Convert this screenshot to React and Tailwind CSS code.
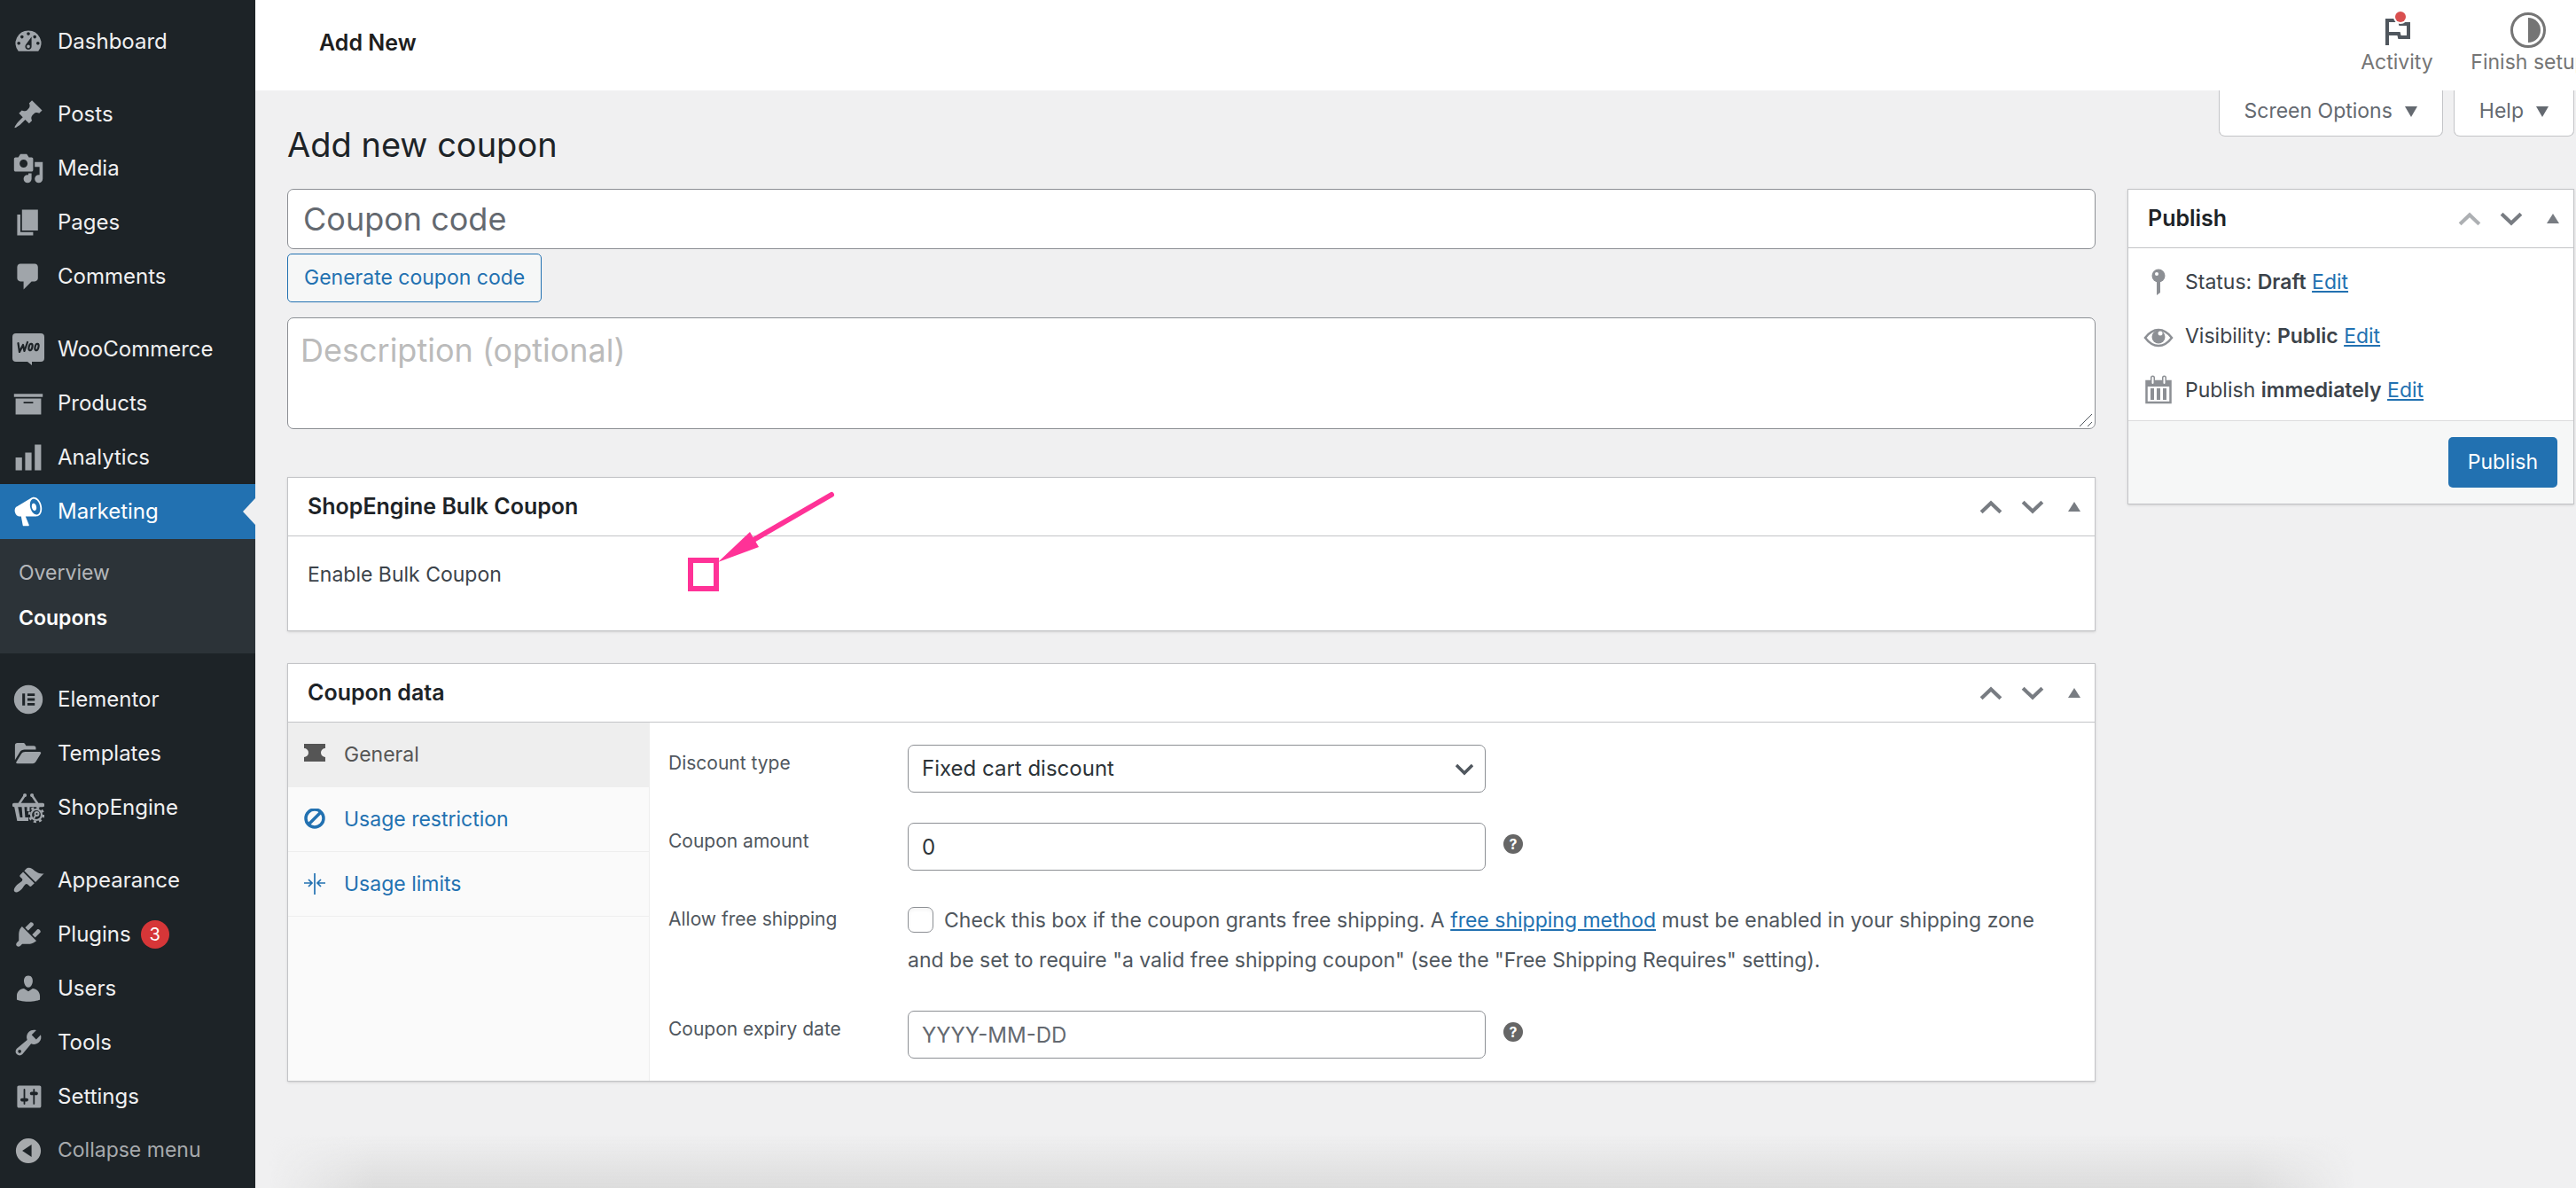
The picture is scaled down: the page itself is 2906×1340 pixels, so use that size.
import React, { useState } from 'react'

const icons = {
  dashboard: 'M3.76 16h12.48A7.998 7.998 0 0010 3a7.998 7.998 0 00-6.24 13zM10 4c.55 0 1 .45 1 1s-.45 1-1 1-1-.45-1-1 .45-1 1-1zM6 6c.55 0 1 .45 1 1s-.45 1-1 1-1-.45-1-1 .45-1 1-1zm8 0c.55 0 1 .45 1 1s-.45 1-1 1-1-.45-1-1 .45-1 1-1zm-5.37 5.55L12 7v6c0 1.1-.9 2-2 2s-2-.9-2-2c0-.57.24-1.08.63-1.45zM4 10c.55 0 1 .45 1 1s-.45 1-1 1-1-.45-1-1 .45-1 1-1zm12 0c.55 0 1 .45 1 1s-.45 1-1 1-1-.45-1-1 .45-1 1-1zm-5 3c0-.55-.45-1-1-1s-1 .45-1 1 .45 1 1 1 1-.45 1-1z',
  posts: 'M10.44 3.02l1.82-1.82 6.36 6.35-1.83 1.82c-1.05-.68-2.48-.57-3.41.36l-.75.75c-.92.93-1.04 2.35-.35 3.41l-1.83 1.82-2.41-2.41-2.8 2.79c-.42.42-3.38 2.71-3.8 2.29s1.86-3.39 2.28-3.81l2.79-2.79L4.1 9.36l1.83-1.82c1.05.69 2.48.57 3.4-.36l.75-.75c.93-.92 1.05-2.35.36-3.41z',
  media: 'M13 11V4c0-.55-.45-1-1-1h-1.67L9 1H5L3.67 3H2c-.55 0-1 .45-1 1v7c0 .55.45 1 1 1h10c.55 0 1-.45 1-1zM7 4.5c1.38 0 2.5 1.12 2.5 2.5S8.38 9.5 7 9.5 4.5 8.38 4.5 7 5.62 4.5 7 4.5zM14 6h5v10.5c0 1.38-1.12 2.5-2.5 2.5S14 17.88 14 16.5s1.12-2.5 2.5-2.5c.17 0 .34.02.5.05V9h-3V6zm-4 8.05V13h2v3.5c0 1.38-1.12 2.5-2.5 2.5S7 17.88 7 16.5 8.12 14 9.5 14c.17 0 .34.02.5.05z',
  pages: 'M6 15V2h10v13H6zm-1 1h8v2H3V5h2v11z',
  comments: 'M5 2h9c1.1 0 2 .9 2 2v7c0 1.1-.9 2-2 2h-2l-5 5v-5H5c-1.1 0-2-.9-2-2V4c0-1.1.9-2 2-2z',
  products: 'M19 4v2H1V4h18zM2 7h16v10H2V7zm11 3V9H7v1h6z',
  analytics: 'M18 18V2h-4v16h4zm-6 0V7H8v11h4zm-6 0v-8H2v8h4z',
  marketing: 'M18.15 5.94c.46 1.62.38 3.22-.02 4.48-.42 1.28-1.26 2.18-2.3 2.48-.16.06-.26.06-.4.06-.06.02-.12.02-.18.02-.06.02-.14.02-.22.02h-6.8l2.22 5.5c.02.14-.06.26-.14.34-.08.1-.24.16-.34.16H6.95c-.1 0-.26-.06-.34-.16-.08-.08-.16-.2-.14-.34l-1-5.5H4.25l-.02-.02c-.5.06-1.08-.18-1.54-.62s-.88-1.08-1.06-1.88c-.24-.8-.2-1.56-.02-2.2.18-.62.58-1.08 1.06-1.3l.02-.02 9-5.4c.1-.06.18-.1.24-.16.06-.04.14-.08.24-.12.16-.08.28-.12.5-.18 1.04-.3 2.24.1 3.22.98s1.84 2.24 2.26 3.86zm-2.58 5.98h-.02c.4-.1.74-.34 1.04-.7.58-.7.86-1.76.86-3.04 0-.64-.1-1.3-.28-1.98-.34-1.36-1.02-2.5-1.78-3.24s-1.68-1.1-2.46-.88c-.82.22-1.4.96-1.7 2-.32 1.04-.28 2.36.06 3.72.38 1.36 1 2.5 1.8 3.24.78.74 1.62 1.1 2.48.88zm-2.54-7.08c.22-.04.42-.02.62.04.38.16.76.48 1.02 1s.42 1.2.42 1.78c0 .3-.04.56-.12.8-.18.48-.44.84-.86.94-.34.1-.8-.06-1.14-.4s-.64-.86-.78-1.5c-.18-.62-.12-1.24.02-1.72s.48-.84.82-.94z',
  elementor: 'M10 1a9 9 0 100 18 9 9 0 000-18zM6.2 6.2h1.7v7.6H6.2zM9.4 6.2h4.6v1.6H9.4zM9.4 9.2h4.6v1.6H9.4zM9.4 12.2h4.6v1.6H9.4z',
  templates: 'M1.6 14V4.8c0-.9.6-1.5 1.5-1.5h3.6c.6 0 .9.2 1.2.7l.7 1.2h4.8c.8 0 1.3.5 1.3 1.3v1H7.6c-1.3 0-2.3.5-3 1.6zM3.2 16.2c-.8 0-1.1-.4-.7-1.1l3.1-4.9c.6-.9 1.3-1.3 2.4-1.3h9c.9 0 1.2.5.7 1.3l-2.9 4.7c-.5.9-1.1 1.3-2.1 1.3z',
  appearance: 'M14.48 11.06L7.41 3.99l1.5-1.5c.5-.56 2.3-.47 3.51.32 1.21.8 1.43 1.28 2.91 2.1 1.18.64 2.45 1.26 4.45.85zm-.71.71L6.7 4.7 4.93 6.47c-.39.39-.39 1.02 0 1.41l1.06 1.06c.39.39.39 1.03 0 1.42-.6.6-1.43 1.11-2.21 1.69-.35.26-.7.53-1.01.84C1.43 14.23.4 16.08 1.4 17.07c.99 1 2.84-.03 4.18-1.36.31-.31.58-.66.85-1.02.57-.78 1.08-1.61 1.69-2.21.39-.39 1.02-.39 1.41 0l1.06 1.06c.39.39 1.02.39 1.41 0z',
  plugins: 'M13.11 4.36L9.87 7.6 8 5.73l3.24-3.24c.35-.34 1.05-.2 1.56.32.52.51.66 1.21.31 1.55zm-8 1.77l.91-1.12 9.01 9.01-1.19.84c-.71.71-2.63 1.16-3.82 1.16H6.14L4.9 17.26c-.59.59-1.54.59-2.12 0-.59-.58-.59-1.53 0-2.12l1.24-1.24v-3.88c0-1.13.4-3.19 1.09-3.89zm7.26 3.97l3.24-3.24c.34-.35 1.04-.21 1.55.31.52.51.66 1.21.31 1.55l-3.24 3.25z',
  users: 'M10 9.25c-2.27 0-2.73-3.44-2.73-3.44C7 4.02 7.82 2 9.97 2c2.16 0 2.98 2.02 2.71 3.81 0 0-.41 3.44-2.68 3.44zm0 2.57L12.72 10c2.39 0 4.52 2.33 4.52 4.53v2.49s-3.65 1.13-7.24 1.13c-3.65 0-7.24-1.13-7.24-1.13v-2.49c0-2.25 1.94-4.48 4.47-4.48z',
  tools: 'M16.68 9.77c-1.34 1.34-3.3 1.67-4.95.99l-5.41 6.52c-.99.99-2.59.99-3.58 0s-.99-2.59 0-3.57l6.52-5.42c-.68-1.65-.35-3.61.99-4.95 1.28-1.28 3.12-1.62 4.72-1.06l-2.89 2.89 2.82 2.82 2.86-2.87c.53 1.58.18 3.39-1.08 4.65zM3.81 16.21c.4.39 1.04.39 1.43 0 .4-.4.4-1.04 0-1.43-.39-.4-1.03-.4-1.43 0-.39.39-.39 1.03 0 1.43z',
  settings: 'M18 16V4c0-.55-.45-1-1-1H4c-.55 0-1 .45-1 1v12c0 .55.45 1 1 1h13c.55 0 1-.45 1-1zM8 11h1c.55 0 1 .45 1 1s-.45 1-1 1H8v1.5c0 .28-.22.5-.5.5s-.5-.22-.5-.5V13H6c-.55 0-1-.45-1-1s.45-1 1-1h1V5.5c0-.28.22-.5.5-.5s.5.22.5.5V11zm5-2h-1c-.55 0-1-.45-1-1s.45-1 1-1h1V5.5c0-.28.22-.5.5-.5s.5.22.5.5V7h1c.55 0 1 .45 1 1s-.45 1-1 1h-1v5.5c0 .28-.22.5-.5.5s-.5-.22-.5-.5V9z',
  collapse: 'M10 2.16c4.33 0 7.84 3.51 7.84 7.84s-3.51 7.84-7.84 7.84S2.16 14.33 2.16 10 5.71 2.16 10 2.16zm2 11.72V6.12L6.18 9.97z',
  up: 'M10 5L18.2 12.9L16.3 14.8L10 8.8L3.7 14.8L1.8 12.9z',
  down: 'M10 15L1.8 7.1L3.7 5.2L10 11.2L16.3 5.2L18.2 7.1z',
}

const Icon = ({ name, className = 'size-9' }) => (
  <svg className={className} viewBox="0 0 20 20" fill="currentColor" fillRule="evenodd" aria-hidden="true">
    <path d={icons[name]} />
  </svg>
)

const WooIcon = () => (
  <svg className="size-9" viewBox="0 0 36 36" aria-hidden="true">
    <path fill="currentColor" d="M4 0h28a4 4 0 0 1 4 4v24a4 4 0 0 1-4 4H22v4l-5-4H4a4 4 0 0 1-4-4V4a4 4 0 0 1 4-4z" />
    <g fill="none" stroke="#1d2327" strokeWidth="2.2" strokeLinecap="round" strokeLinejoin="round">
      <path d="M6.500 11l1.500 10 4-8 1.500 7 3.500-10" />
      <ellipse cx="20.500" cy="15.500" rx="1.900" ry="3.800" transform="rotate(14 20.500 15.500)" />
      <ellipse cx="27.500" cy="15.500" rx="1.900" ry="3.800" transform="rotate(14 27.500 15.500)" />
    </g>
  </svg>
)

const ShopEngineIcon = () => (
  <svg className="size-9" viewBox="0 0 36 36" fill="none" stroke="currentColor" aria-hidden="true">
    <path d="M8 13l6-9M28 13L22 4" strokeWidth="2.500" strokeLinecap="round" />
    <path d="M14 4h.1M22 4h.1" strokeWidth="4" strokeLinecap="round" />
    <path d="M2 15h32" strokeWidth="4.500" strokeLinecap="round" />
    <path d="M4 16l3 15h11" strokeWidth="4" />
    <path d="M12 17l1 13M18 17v5" strokeWidth="3" />
    <circle cx="27" cy="26" r="6" strokeWidth="2.200" />
    <circle cx="27" cy="26" r="8" strokeWidth="2.500" strokeDasharray="3.1 3.183" />
    <circle cx="27.500" cy="25" r="2" strokeWidth="2" />
    <path d="M26 27l-2 3" strokeWidth="2" />
  </svg>
)

const menuGroups = [
  [{ label: 'Dashboard', icon: 'dashboard' }],
  [
    { label: 'Posts', icon: 'posts' },
    { label: 'Media', icon: 'media' },
    { label: 'Pages', icon: 'pages' },
    { label: 'Comments', icon: 'comments' },
  ],
  [
    { label: 'WooCommerce', icon: 'woo' },
    { label: 'Products', icon: 'products' },
    { label: 'Analytics', icon: 'analytics' },
    { label: 'Marketing', icon: 'marketing', active: true, children: ['Overview', 'Coupons'] },
  ],
  [
    { label: 'Elementor', icon: 'elementor' },
    { label: 'Templates', icon: 'templates' },
    { label: 'ShopEngine', icon: 'shopengine' },
  ],
  [
    { label: 'Appearance', icon: 'appearance' },
    { label: 'Plugins', icon: 'plugins', count: 3 },
    { label: 'Users', icon: 'users' },
    { label: 'Tools', icon: 'tools' },
    { label: 'Settings', icon: 'settings' },
  ],
]

const MenuItem = ({ item }) => (
  <li>
    <a
      href="#"
      className={`relative flex items-center gap-[15px] pl-[14px] text-2xl ${
        item.active ? 'h-[62px] bg-[#2271b1] text-white' : 'h-[61px] text-[#f0f0f1]'
      }`}
    >
      <span className={item.active ? 'text-white' : 'text-[#a0a5aa]'}>
        {item.icon === 'woo' && <WooIcon />}
        {item.icon === 'shopengine' && <ShopEngineIcon />}
        {icons[item.icon] && <Icon name={item.icon} />}
      </span>
      {item.label}
      {item.count && (
        <span className="flex size-8 -ml-1 items-center justify-center rounded-full bg-[#d63638] text-xl text-white">
          {item.count}
        </span>
      )}
      {item.active && (
        <span className="absolute right-0 top-1/2 -translate-y-1/2 border-y-[15px] border-r-[14px] border-y-transparent border-r-[#f0f0f1]" />
      )}
    </a>
    {item.children && (
      <ul className="bg-[#2c3338] pt-[13px] pb-[14px] text-[23px]">
        {item.children.map((child) => (
          <li key={child}>
            <a
              href="#"
              className={`flex h-[51px] items-center pl-[21px] ${
                child === 'Coupons' ? 'font-semibold text-white' : 'text-[#b4b7ba]'
              }`}
            >
              {child}
            </a>
          </li>
        ))}
      </ul>
    )}
  </li>
)

const Sidebar = () => (
  <nav className="w-[288px] shrink-0 bg-[#1d2327] pt-4">
    <div className="flex flex-col gap-[21px]">
      {menuGroups.map((group) => (
        <ul key={group[0].label}>
          {group.map((item) => (
            <MenuItem key={item.label} item={item} />
          ))}
        </ul>
      ))}
    </div>
    <button className="flex h-[61px] w-full items-center gap-[15px] pl-[14px] text-[23px] text-[#a7aaad]">
      <Icon name="collapse" />
      Collapse menu
    </button>
  </nav>
)

const Header = () => (
  <header className="flex h-[102px] items-center justify-between overflow-hidden bg-white pb-1 pl-[72px]">
    <h1 className="text-[25px] font-semibold text-[#1e1e1e]">Add New</h1>
    <div className="-mr-[14px] flex text-[23px] leading-8 text-[#757575]">
      <button className="flex w-[124px] flex-col items-center">
        <svg className="size-[42px]" viewBox="0 0 42 42" fill="none" aria-hidden="true">
          <path d="M10 39V11h14l1 4h9v15H24l-1-4H10" stroke="#50575e" strokeWidth="4" />
          <circle cx="25" cy="7" r="8" fill="#fff" />
          <circle cx="25" cy="7" r="6" fill="#d94f4f" />
        </svg>
        Activity
      </button>
      <button className="ml-5 flex w-[134px] flex-col items-center whitespace-nowrap">
        <svg className="size-[42px]" viewBox="0 0 42 42" aria-hidden="true">
          <circle cx="20" cy="22" r="18.500" fill="none" stroke="#757575" strokeWidth="3" />
          <path d="M20 8a14 14 0 0 1 0 28z" fill="#757575" />
        </svg>
        Finish setup
      </button>
    </div>
  </header>
)

const MetaTab = ({ children }) => (
  <button className="flex h-[52px] items-center gap-[14px] rounded-b-[7px] border border-t-0 border-[#c3c4c7] bg-white px-7 pb-1 text-[23px] text-[#646970]">
    {children}
    <span className="border-x-[7px] border-t-[12px] border-x-transparent border-t-[#646970]" />
  </button>
)

const Panel = ({ title, firstPanel, children }) => (
  <section className="border border-[#c3c4c7] bg-white shadow-sm">
    <div className="flex h-[66px] items-center justify-between border-b border-[#c3c4c7] pl-[22px] pr-2">
      <h2 className="text-[25px] font-semibold text-[#1d2327]">{title}</h2>
      <div className="flex items-center gap-[17px] text-[#787c82]">
        <button aria-label="Move up" className={firstPanel ? 'opacity-60' : ''}>
          <Icon name="up" className="size-[30px]" />
        </button>
        <button aria-label="Move down">
          <Icon name="down" className="size-[30px]" />
        </button>
        <button aria-label="Toggle panel" className="flex w-[30px] justify-center">
          <span className="border-x-[7px] border-b-[11px] border-x-transparent border-b-[#787c82]" />
        </button>
      </div>
    </div>
    {children}
  </section>
)

const Help = () => (
  <button
    aria-label="Help"
    className="mt-[13px] flex size-[22px] items-center justify-center rounded-full bg-[#666] text-base font-bold text-white"
  >
    ?
  </button>
)

const Row = ({ label, id, children }) => (
  <div className="flex">
    <label htmlFor={id} className="w-[270px] shrink-0 text-[21px] leading-[42px]">
      {label}
    </label>
    {children}
  </div>
)

const inputClass = 'h-[54px] w-[652px] rounded-[7px] border border-[#8c8f94] bg-white px-[15px] text-2xl text-[#2c3338]'

const tabs = ['General', 'Usage restriction', 'Usage limits']

const TabIcon = ({ name }) => (
  <svg className="size-6" viewBox="0 2 24 24" fill="none" stroke="currentColor" aria-hidden="true">
    {name === 'General' && (
      <path d="M0 2h24v5a5 5 0 0 0 0 10v5H0v-5a5 5 0 0 0 0-10z" fill="currentColor" stroke="none" />
    )}
    {name === 'Usage restriction' && (
      <>
        <circle cx="12" cy="13" r="10" strokeWidth="3.500" />
        <path d="M5 20L19 6" strokeWidth="3.500" />
      </>
    )}
    {name === 'Usage limits' && (
      <path d="M12 2v24M0 13h9M5 9l4 4-4 4M24 13h-9M19 9l-4 4 4 4" strokeWidth="1.700" />
    )}
  </svg>
)

const CouponData = () => {
  const [tab, setTab] = useState('General')

  return (
    <Panel title="Coupon data">
      <div className="flex">
        <div className="w-[408px] shrink-0 border-r border-[#eee] bg-[#fafafa]">
          {tabs.map((name) => (
            <button
              key={name}
              onClick={() => setTab(name)}
              className={`flex h-[73px] w-full items-center gap-[21px] border-b border-[#eee] pl-[18px] text-[23px] ${
                tab === name ? 'bg-[#eee] text-[#555]' : 'text-[#2271b1]'
              }`}
            >
              <TabIcon name={name} />
              {name}
            </button>
          ))}
        </div>
        <div className="flex flex-1 flex-col gap-[34px] py-[25px] pl-[21px] pr-[22px] text-[#50575e]">
          <Row label="Discount type" id="discount_type">
            <div className="relative">
              <select id="discount_type" className={`${inputClass} appearance-none`}>
                <option>Fixed cart discount</option>
              </select>
              <svg
                className="pointer-events-none absolute right-[14px] top-[18px] size-5"
                viewBox="0 0 20 20"
                fill="none"
                stroke="#50575e"
                strokeWidth="3.500"
                aria-hidden="true"
              >
                <path d="M1 5l9 9 9-9" />
              </svg>
            </div>
          </Row>
          <Row label="Coupon amount" id="coupon_amount">
            <div className="flex items-start gap-5">
              <input id="coupon_amount" type="text" defaultValue="0" className={inputClass} />
              <Help />
            </div>
          </Row>
          <Row label="Allow free shipping" id="free_shipping">
            <p className="text-[23px] leading-[45px]">
              <input
                id="free_shipping"
                type="checkbox"
                className="mr-3 size-[29px] appearance-none rounded-[7px] border border-[#8c8f94] bg-white align-[-6px] shadow-inner"
              />
              Check this box if the coupon grants free shipping. A{' '}
              <a href="#" className="text-[#2271b1] underline">free shipping method</a> must be enabled in your
              shipping zone and be set to require "a valid free shipping coupon" (see the "Free Shipping Requires"
              setting).
            </p>
          </Row>
          <Row label="Coupon expiry date" id="expiry_date">
            <div className="flex items-start gap-5">
              <input
                id="expiry_date"
                type="text"
                placeholder="YYYY-MM-DD"
                className={`${inputClass} placeholder:text-[#646970]`}
              />
              <Help />
            </div>
          </Row>
        </div>
      </div>
    </Panel>
  )
}

const BulkCoupon = () => (
  <Panel title="ShopEngine Bulk Coupon">
    <div className="flex h-[106px] items-start pl-[22px] pt-6">
      <label htmlFor="bulk_coupon" className="w-[429px] text-[23px] leading-[38px] text-[#3c434a]">
        Enable Bulk Coupon
      </label>
      <div className="relative">
        <input
          id="bulk_coupon"
          type="checkbox"
          className="block h-[38px] w-[35px] appearance-none border-[6px] border-[#ff3297] bg-white"
        />
        {/* Arrow pointing at the checkbox */}
        <svg
          className="pointer-events-none absolute left-[34px] -top-[79px] h-[84px] w-[134px]"
          viewBox="0 0 134 84"
          aria-hidden="true"
        >
          <path d="M128 8L40 59" stroke="#ff3297" strokeWidth="6" strokeLinecap="round" />
          <path d="M0 84L36 50L46 67z" fill="#ff3297" />
        </svg>
      </div>
    </div>
  </Panel>
)

const PublishIcon = ({ name }) => (
  <svg className="h-9 w-9 shrink-0" viewBox="0 0 36 36" fill="none" stroke="#8c8f94" aria-hidden="true">
    {name === 'status' && (
      <>
        <circle cx="18" cy="10" r="7.500" fill="#8c8f94" stroke="none" />
        <circle cx="16" cy="8" r="2" fill="#fff" stroke="none" />
        <path d="M16 16h4v13l-4 3z" fill="#8c8f94" stroke="none" />
      </>
    )}
    {name === 'visibility' && (
      <>
        <path d="M3 19c9-12 21-12 30 0-9 12-21 12-30 0z" strokeWidth="2.500" />
        <circle cx="18" cy="18" r="7.500" fill="#8c8f94" stroke="none" />
        <circle cx="20" cy="14" r="2.500" fill="#fff" stroke="none" />
      </>
    )}
    {name === 'date' && (
      <>
        <path d="M4.500 7h27v24h-27z" strokeWidth="2.500" />
        <path d="M4 6h28v7H4z" fill="#8c8f94" stroke="none" />
        <path d="M11.500 3v6M24.500 3v6" strokeWidth="5" strokeLinecap="round" />
        <path d="M11.500 3v6M24.500 3v6" stroke="#fff" strokeWidth="2" strokeLinecap="round" />
        <path d="M11 15v13M18 15v13M25 15v13" strokeWidth="4" />
      </>
    )}
  </svg>
)

const publishRows = [
  { icon: 'status', label: 'Status: ', value: 'Draft' },
  { icon: 'visibility', label: 'Visibility: ', value: 'Public' },
  { icon: 'date', label: 'Publish ', value: 'immediately' },
]

const PublishBox = () => (
  <Panel title="Publish" firstPanel>
    <div className="pt-2 pb-[3px] text-[23px] text-[#3c434a]">
      {publishRows.map((row) => (
        <div key={row.icon} className="flex h-[61px] items-center gap-3 pl-4">
          <PublishIcon name={row.icon} />
          <p>
            {row.label}
            <span className="font-semibold">{row.value}</span>{' '}
            <a href="#" className="text-[#2271b1] underline">Edit</a>
          </p>
        </div>
      ))}
    </div>
    <div className="flex justify-end border-t border-[#dcdcde] bg-[#f6f7f7] p-[18px]">
      <button className="h-[57px] rounded-[5px] bg-[#2271b1] px-[22px] text-[23px] text-white">Publish</button>
    </div>
  </Panel>
)

const App = () => {
  return (
    <div className="flex min-h-screen overflow-hidden bg-[#f0f0f1] font-['Inter',sans-serif]">
      <Sidebar />
      <div className="flex min-w-0 flex-1 flex-col">
        <Header />
        <div className="flex justify-between pl-9 pr-0.5">
          <h2 className="pt-[31px] text-[38px] leading-[60px] text-[#1d2327]">Add new coupon</h2>
          <div className="flex gap-3">
            <MetaTab>Screen Options</MetaTab>
            <MetaTab>Help</MetaTab>
          </div>
        </div>
        <main className="flex items-start gap-9 pl-9 pr-0.5 pt-5">
          <div className="min-w-0 flex-1">
            <input
              type="text"
              aria-label="Coupon code"
              placeholder="Coupon code"
              className="block h-[68px] w-full rounded-[7px] border border-[#8c8f94] bg-white px-[17px] text-4xl placeholder:text-[#646970]"
            />
            <button className="mt-[5px] h-[55px] rounded-[5px] border border-[#2271b1] bg-[#f6f7f7] px-[18px] text-[23px] text-[#2271b1]">
              Generate coupon code
            </button>
            <div className="relative mt-[17px]">
              <textarea
                aria-label="Description"
                placeholder="Description (optional)"
                className="block h-[126px] w-full resize-none rounded-[7px] border border-[#8c8f94] bg-white px-[14px] py-2 text-4xl leading-[56px] placeholder:text-[#bbb]"
              />
              <svg
                className="pointer-events-none absolute bottom-0.5 right-0.5 size-4"
                viewBox="0 0 16 16"
                stroke="#50575e"
                aria-hidden="true"
              >
                <path d="M0 15L14 1M9 15L14 10" />
              </svg>
            </div>
            <div className="mt-[54px] flex flex-col gap-9">
              <BulkCoupon />
              <CouponData />
            </div>
          </div>
          <aside className="w-[504px] shrink-0">
            <PublishBox />
          </aside>
        </main>
        <div className="mt-auto mr-[250px] ml-4 h-[60px] bg-linear-to-b from-transparent to-[#dcdcdc] mask-x-from-95%" />
      </div>
    </div>
  )
}

export default App
